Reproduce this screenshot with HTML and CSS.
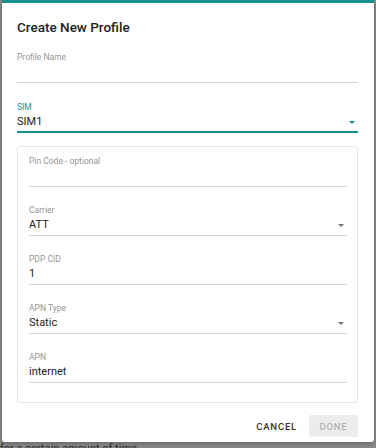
FILE: index.html
```html
<!DOCTYPE html>
<html lang="en">
<head>
  <meta charset="UTF-8">
  <meta name="viewport" content="width=device-width, initial-scale=1.0">
  <title>Create New Profile</title>
  <link rel="stylesheet" href="styles.css">
</head>
<body>
  <div class="page">
    <div class="dialog">
      <h2 class="dialog-title">Create New Profile</h2>

      <div class="field">
        <div class="field-label">Profile Name</div>
        <div class="field-value"></div>
      </div>

      <div class="field select focused">
        <div class="field-label">SIM</div>
        <div class="field-value">SIM1</div>
        <span class="arrow"></span>
      </div>

      <div class="sim-card">
        <div class="field">
          <div class="field-label">Pin Code - optional</div>
          <div class="field-value"></div>
        </div>

        <div class="field select">
          <div class="field-label">Carrier</div>
          <div class="field-value">ATT</div>
          <span class="arrow"></span>
        </div>

        <div class="field">
          <div class="field-label">PDP CID</div>
          <div class="field-value">1</div>
        </div>

        <div class="field select">
          <div class="field-label">APN Type</div>
          <div class="field-value">Static</div>
          <span class="arrow"></span>
        </div>

        <div class="field">
          <div class="field-label">APN</div>
          <div class="field-value">internet</div>
        </div>
      </div>

      <div class="actions">
        <button class="btn">CANCEL</button>
        <button class="btn btn-disabled" disabled>DONE</button>
      </div>
    </div>
    <p class="behind">for a certain amount of time.</p>
  </div>
</body>
</html>
```

FILE: styles.css
```css
:root {
  --teal: #17918d;
  --text: #222;
  --label: #949494;
  --line: #d5d5d5;
}

* {
  margin: 0;
  padding: 0;
  box-sizing: border-box;
}

body {
  font-family: Roboto, "Liberation Sans", sans-serif;
  background-color: #8e8e8e;
  color: var(--text);
  overflow: hidden;
}

.page {
  padding: 0 2px 0 2px;
  height: 448px;
}

.dialog {
  width: 372px;
  height: 442px;
  background-color: #fff;
  border-top: 3px solid var(--teal);
  border-radius: 0 0 3px 3px;
  padding: 14px 16px 9px 15px;
  box-shadow: 0 2px 6px rgba(0, 0, 0, 0.3);
  display: flex;
  flex-direction: column;
}

.dialog-title {
  font-size: 13.5px;
  font-weight: 500;
  line-height: 20px;
  margin-bottom: 14px;
}

.field {
  position: relative;
  margin-bottom: 18px;
}

.field-label {
  font-size: 8.5px;
  line-height: 12px;
  color: var(--label);
}

.field-value {
  font-size: 11px;
  line-height: 18px;
  height: 20px;
  padding-bottom: 2px;
  border-bottom: 1px solid var(--line);
}

.focused .field-label {
  color: var(--teal);
}

.focused .field-value {
  border-bottom: 2px solid var(--teal);
}

.arrow {
  position: absolute;
  right: 3px;
  top: 20px;
  width: 0;
  height: 0;
  border-left: 3px solid transparent;
  border-right: 3px solid transparent;
  border-top: 3px solid #777;
}

.focused .arrow {
  border-top-color: var(--teal);
}

.sim-card {
  border: 1px solid #e6e6e6;
  border-radius: 3px;
  padding: 8px 10px 2px 11px;
  margin-top: -5px;
}

.sim-card .field {
  margin-bottom: 17px;
}

.actions {
  display: flex;
  justify-content: flex-end;
  gap: 4px;
  margin-top: 12px;
}

.btn {
  font-family: Roboto, "Liberation Sans", sans-serif;
  font-size: 9.5px;
  font-weight: 500;
  letter-spacing: 0.8px;
  height: 22px;
  padding: 0 8px;
  border: none;
  border-radius: 2px;
  background: none;
  color: #333;
}

.btn-disabled {
  background-color: #ececec;
  color: #b3b3b3;
  width: 49px;
  padding: 0;
}

.behind {
  font-size: 11px;
  line-height: 12px;
  color: #2a2a2a;
  margin-left: -2px;
  margin-top: 1px;
}
```
